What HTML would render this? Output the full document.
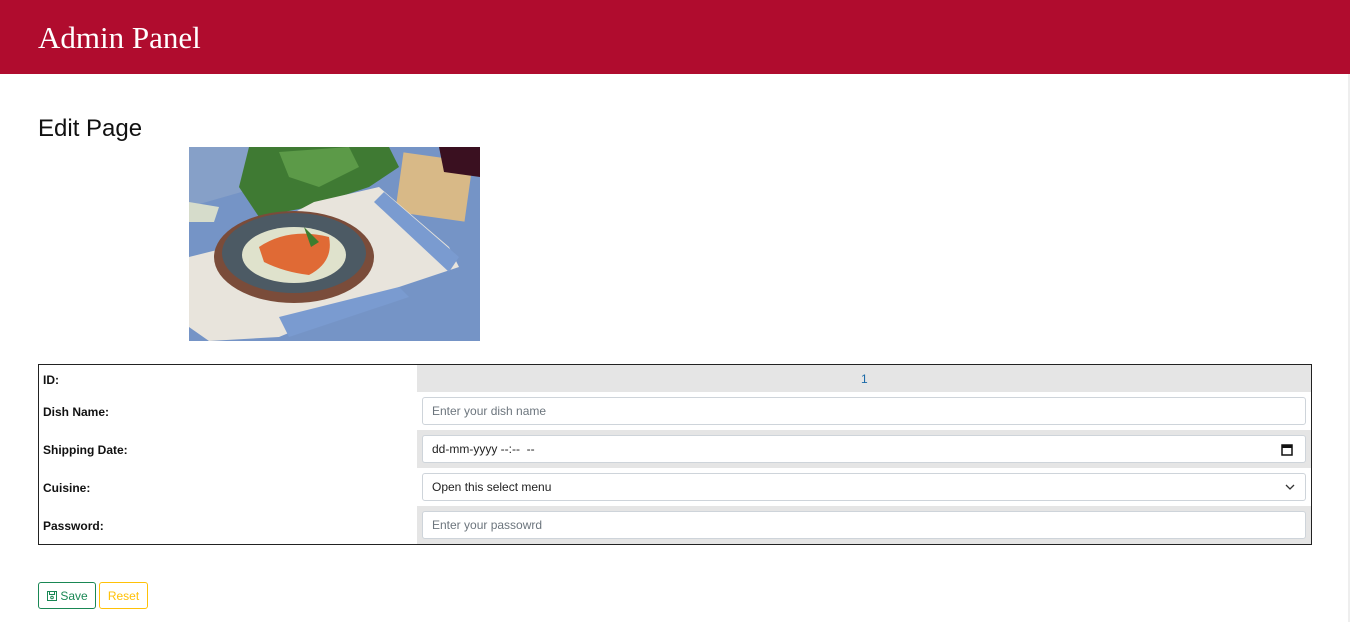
<!DOCTYPE html>
<html><head><style>
body{margin:0;width:1350px;height:622px;background:#fff;font-family:"Liberation Sans",sans-serif;position:relative;overflow:hidden}
.hdr{position:absolute;left:0;top:0;width:1350px;height:74px;background:#b00c2e}
.hdr div{position:absolute;left:38px;top:20px;font-family:"Liberation Serif",serif;font-size:31px;color:#fff}
.sb{position:absolute;left:1348px;top:74px;width:2px;height:548px;background:#eee}
h1{position:absolute;left:38px;top:115px;margin:0;font-weight:normal;font-size:24px;color:#111}
.img{position:absolute;left:189px;top:147px;width:291px;height:194px;overflow:hidden}
.tbl{position:absolute;left:38px;top:364px;width:1272px;height:179px;border:1px solid #222}
.row{position:absolute;left:0;width:1272px}
.lab{position:absolute;left:4px;font-size:12px;font-weight:bold;color:#111}
.g{position:absolute;left:378px;width:894px;background:#e5e5e5}
.inp{position:absolute;left:383px;width:882px;height:26px;border:1px solid #ced4da;border-radius:3px;background:#fff;font-size:12px;color:#6c757d;line-height:26px;text-indent:9px;box-sizing:content-box}
.btn{position:absolute;top:582px;height:27px;border-radius:3px;font-size:12px;line-height:27px;box-sizing:border-box}
</style></head><body>
<div class="hdr"><div>Admin Panel</div></div>
<div class="sb"></div>
<h1>Edit Page</h1>
<div class="img"><svg width="291" height="194" viewBox="0 0 291 194">
<rect width="291" height="194" fill="#6f8fbf"/>
<rect x="0" y="0" width="291" height="80" fill="#86a0c8"/>
<path d="M0 60 L70 40 L120 30 L150 0 L291 0 L291 194 L0 194Z" fill="#7594c6"/>
<path d="M60 0 L200 0 L210 20 L180 40 L120 60 L70 70 L50 40Z" fill="#3f7a33"/>
<path d="M90 5 L160 0 L170 20 L130 40 L100 30Z" fill="#5c9a48"/>
<rect x="210" y="10" width="70" height="60" fill="#d8b987" transform="rotate(8 245 40)"/>
<path d="M250 0 L291 0 L291 30 L255 25Z" fill="#3a1020"/>
<path d="M125 55 L190 40 L260 100 L270 120 L210 140 L90 190 L20 194 L0 180 L0 110 L40 100Z" fill="#e8e4dc"/>
<path d="M195 45 L270 110 L260 125 L185 55Z" fill="#7a9bd0"/>
<path d="M90 170 L210 140 L220 150 L100 190Z" fill="#7a9bd0"/>
<ellipse cx="105" cy="110" rx="80" ry="46" fill="#7a4c3a"/>
<ellipse cx="105" cy="106" rx="72" ry="40" fill="#4c5a64"/>
<ellipse cx="105" cy="108" rx="52" ry="28" fill="#dfe2cc"/>
<path d="M70 100 Q100 80 140 90 Q145 115 120 128 Q95 125 75 115Z" fill="#e06a35"/>
<path d="M115 80 L130 95 L122 100Z" fill="#3e7d2e"/>
<path d="M0 55 L30 60 L25 75 L0 75Z" fill="#d6dccb"/>
</svg></div>
<div class="tbl">
<div class="row" style="top:0;height:27px"><div class="g" style="top:0;height:27px"></div><div class="lab" style="top:8px">ID:</div><div style="position:absolute;left:822px;top:7px;font-size:12px;color:#1a6aa8">1</div></div>
<div class="row" style="top:27px;height:38px"><div class="lab" style="top:13px">Dish Name:</div><div class="inp" style="top:5px">Enter your dish name</div></div>
<div class="row" style="top:65px;height:38px"><div class="g" style="top:0;height:38px"></div><div class="lab" style="top:13px">Shipping Date:</div><div class="inp" style="top:5px;color:#222">dd-mm-yyyy --:-- &nbsp;--<svg style="position:absolute;right:12px;top:7px" width="12" height="13" viewBox="0 0 12 13"><rect x="1" y="2" width="10" height="10" fill="none" stroke="#111" stroke-width="1.5"/><rect x="1" y="2" width="10" height="3" fill="#111"/></svg></div></div>
<div class="row" style="top:103px;height:38px"><div class="lab" style="top:13px">Cuisine:</div><div class="inp" style="top:5px;color:#222">Open this select menu<svg style="position:absolute;right:10px;top:10px" width="10" height="6" viewBox="0 0 10 6"><path d="M1 1 L5 5 L9 1" fill="none" stroke="#333" stroke-width="1.3"/></svg></div></div>
<div class="row" style="top:141px;height:38px"><div class="g" style="top:0;height:38px"></div><div class="lab" style="top:13px">Password:</div><div class="inp" style="top:5px">Enter your passowrd</div></div>
</div>
<div class="btn" style="left:38px;width:58px;border:1px solid #198754;color:#198754;padding-left:8px"><svg width="10" height="10" viewBox="0 0 10 10" style="vertical-align:-1px"><rect x="0.5" y="0.5" width="9" height="9" fill="none" stroke="#198754"/><rect x="2.5" y="0.5" width="5" height="3" fill="none" stroke="#198754"/><circle cx="5" cy="6.5" r="1.3" fill="none" stroke="#198754"/></svg> Save</div>
<div class="btn" style="left:99px;width:49px;border:1px solid #ffc107;color:#ffc107;text-align:center">Reset</div>
</body></html>
